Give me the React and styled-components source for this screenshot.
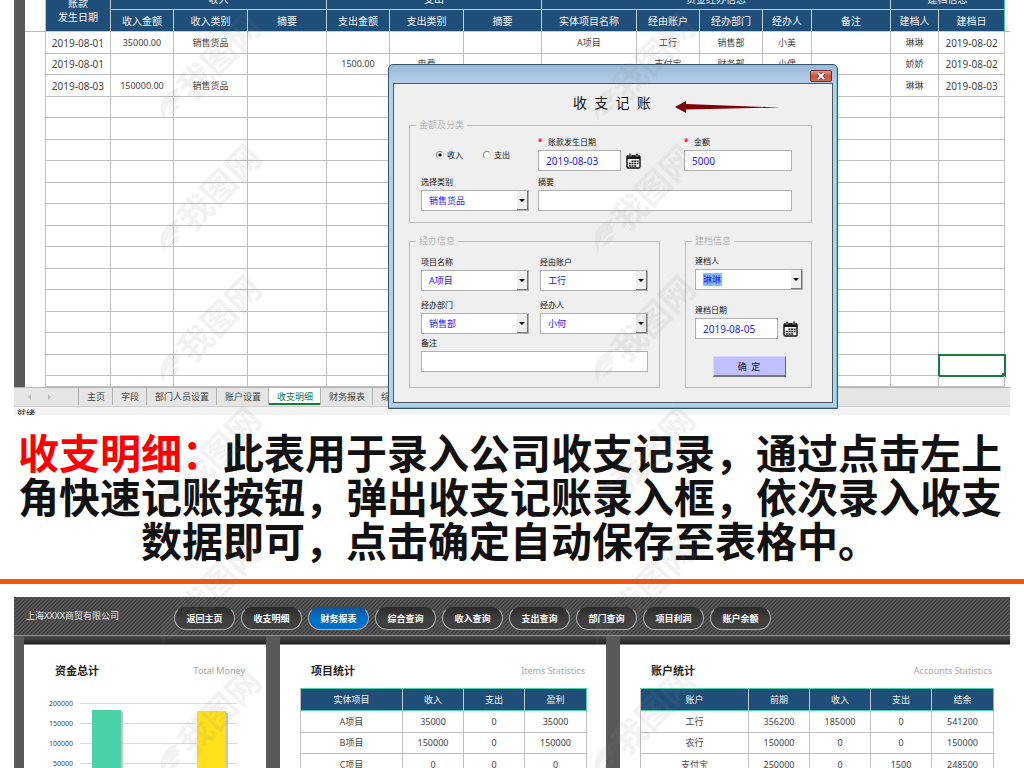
import React from 'react';
import styled, { createGlobalStyle, css } from 'styled-components';

const GlobalStyle = createGlobalStyle`
  * {
    box-sizing: border-box;
  }

  body {
    margin: 0;
    background: #fff;
    color: #444;
    font-family: 'Noto Sans', 'Noto Sans CJK SC', sans-serif;
    font-size: 9px;
    line-height: 12px;
  }

  button, input, select {
    font-family: inherit;
    margin: 0;
  }
`;

const columns = [65, 63, 74, 79, 63, 74, 78, 95, 63, 63, 49, 79, 48, 66];

const subHeaders = [
  '收入金额', '收入类别', '摘要', '支出金额', '支出类别', '摘要',
  '实体项目名称', '经由账户', '经办部门', '经办人', '备注', '建档人', '建档日',
];

const records = [
  ['2019-08-01', '35000.00', '销售货品', '', '', '', '', 'A项目', '工行', '销售部', '小美', '', '琳琳', '2019-08-02'],
  ['2019-08-01', '', '', '', '1500.00', '电费', '', '', '支付宝', '财务部', '小偶', '', '娇娇', '2019-08-02'],
  ['2019-08-03', '150000.00', '销售货品', '', '', '', '', '', '', '', '', '', '琳琳', '2019-08-03'],
];

const emptyRows = Array.from({ length: 14 }, (_, i) => i);

const sheetTabs = ['主页', '字段', '部门人员设置', '账户设置', '收支明细', '财务报表', '综合查询'];

const navItems = ['返回主页', '收支明细', '财务报表', '综合查询', '收入查询', '支出查询', '部门查询', '项目利润', '账户余额'];

const itemStats = {
  widths: [102, 61, 61, 62],
  head: ['实体项目', '收入', '支出', '盈利'],
  rows: [
    ['A项目', '35000', '0', '35000'],
    ['B项目', '150000', '0', '150000'],
    ['C项目', '0', '0', '0'],
  ],
};

const accountStats = {
  widths: [108, 61, 61, 61, 62],
  head: ['账户', '前期', '收入', '支出', '结余'],
  rows: [
    ['工行', '356200', '185000', '0', '541200'],
    ['农行', '150000', '0', '0', '150000'],
    ['支付宝', '250000', '0', '1500', '248500'],
  ],
};

const CalendarIcon = () => (
  <svg width="15" height="16" viewBox="0 0 15 16" aria-hidden="true">
    <rect x="1" y="3" width="13" height="12" rx="1" fill="#f4f4f4" stroke="#111" strokeWidth="1.4" />
    <path d="M1 2.5h13V6H1z" fill="#111" />
    <path d="M4 .5v3M11 .5v3" stroke="#f0f0f0" strokeWidth="2.6" />
    <path d="M4 .5v3M11 .5v3" stroke="#111" strokeWidth="1.4" />
    <path
      d="M5.5 8.2h2m.7 0h2m.7 0h1.6M2.8 10.6h2m.7 0h2m.7 0h2m.7 0h1.6M2.8 13h2m.7 0h2m.7 0h2"
      stroke="#111"
      strokeWidth="1.5"
    />
  </svg>
);

const Watermark = () => (
  <WatermarkLayer aria-hidden="true">
    <defs>
      <pattern id="mark" width="434" height="131" patternUnits="userSpaceOnUse">
        <g fill="#8a8a8a">
          <text
            x="0"
            y="0"
            transform="translate(193 102) rotate(-46)"
            fontSize="34"
            fontWeight="700"
          >
            我图网
          </text>
          <path d="M164 121c-7-14-3-27 15-34-2 4-3 7-2 9-7 4-12 12-13 25z" />
          <path d="M168 111c1-9 6-15 13-18-3 4-3 6-1 8-5 1-9 5-12 10z" />
          <path d="M168 115c3-6 7-10 12-11-1 6-5 10-12 11z" />
        </g>
      </pattern>
    </defs>
    <rect width="100%" height="100%" fill="url(#mark)" />
  </WatermarkLayer>
);

const SelectField = ({ id, label, value, selected }) => (
  <Field>
    <Label htmlFor={id}>{label}</Label>
    <SelectBox>
      <Select id={id} defaultValue={value} $selected={selected}>
        <option>{value}</option>
      </Select>
      <Arrow>
        <svg width="6" height="3" viewBox="0 0 6 3">
          <path d="M0 0h6L3 3z" fill="#000" />
        </svg>
      </Arrow>
    </SelectBox>
  </Field>
);

const DateField = ({ id, label, value, required }) => (
  <Field>
    <Label htmlFor={id}>
      {required && <Star>*</Star>}
      {label}
    </Label>
    <DateRow>
      <Input id={id} defaultValue={value} />
      <IconButton type="button" aria-label="选择日期">
        <CalendarIcon />
      </IconButton>
    </DateRow>
  </Field>
);

const RecordDialog = () => (
  <Dialog role="dialog" aria-label="收支记账">
    <TitleBar>
      <CloseButton type="button" aria-label="关闭">
        <svg width="10" height="8" viewBox="0 0 10 8">
          <path d="M2 1l6 6M8 1L2 7" stroke="#6b2a2a" strokeWidth="3.4" />
          <path d="M2 1l6 6M8 1L2 7" stroke="#fff" strokeWidth="2" />
        </svg>
      </CloseButton>
    </TitleBar>
    <Client>
      <DialogHead>
        <DialogTitle>收  支  记  账</DialogTitle>
        <svg width="106" height="22" viewBox="0 0 106 22" aria-hidden="true">
          <path d="M0 15L11 9v3l94 3.500-94 2v3.500z" fill="#800008" />
        </svg>
      </DialogHead>

      <Group>
        <Legend>金额及分类</Legend>
        <AmountGrid>
          <Radios>
            <RadioLabel>
              <Radio type="radio" name="kind" defaultChecked />
              收入
            </RadioLabel>
            <RadioLabel>
              <Radio type="radio" name="kind" />
              支出
            </RadioLabel>
          </Radios>
          <DateField id="date" label="账款发生日期" value="2019-08-03" required />
          <Field>
            <Label htmlFor="amount"><Star>*</Star>金额</Label>
            <Input id="amount" defaultValue="5000" />
          </Field>
          <SelectField id="category" label="选择类别" value="销售货品" />
          <Wide>
            <Label htmlFor="summary">摘要</Label>
            <Input id="summary" />
          </Wide>
        </AmountGrid>
      </Group>

      <GroupRow>
        <Group>
          <Legend>经办信息</Legend>
          <HandlerBody>
            <HandlerGrid>
              <SelectField id="project" label="项目名称" value="A项目" />
              <SelectField id="account" label="经由账户" value="工行" />
              <SelectField id="department" label="经办部门" value="销售部" />
              <SelectField id="handler" label="经办人" value="小何" />
            </HandlerGrid>
            <Field>
              <Label htmlFor="remark">备注</Label>
              <Input id="remark" />
            </Field>
          </HandlerBody>
        </Group>
        <Group>
          <Legend>建档信息</Legend>
          <FilingBody>
            <SelectField id="filer" label="建档人" value="琳琳" selected />
            <DateField id="filed" label="建档日期" value="2019-08-05" />
            <Submit type="button">确  定</Submit>
          </FilingBody>
        </Group>
      </GroupRow>
    </Client>
  </Dialog>
);

const Stats = ({ data }) => (
  <Grid>
    <colgroup>
      {data.widths.map((w, i) => <Col key={i} $w={w} />)}
    </colgroup>
    <thead>
      <tr>{data.head.map((h) => <StatTh key={h}>{h}</StatTh>)}</tr>
    </thead>
    <tbody>
      {data.rows.map((row) => (
        <Row key={row[0]}>
          {row.map((cell, i) => <Td key={i}>{cell}</Td>)}
        </Row>
      ))}
    </tbody>
  </Grid>
);

const MoneyChart = () => (
  <Chart viewBox="0 0 200 100" role="img" aria-label="资金总计">
    {[200000, 150000, 100000, 50000].map((v, i) => (
      <g key={v}>
        <text x="25" y={18 + i * 20} textAnchor="end" fontSize="7" fill="#444">{v}</text>
        <path d={`M32 ${15.5 + i * 20}h157`} stroke="#dcdcdc" />
      </g>
    ))}
    <rect x="46" y="24" width="29" height="80" fill="#c4c4c4" />
    <rect x="151" y="25" width="29" height="80" fill="#c4c4c4" />
    <rect x="44" y="22" width="29" height="80" fill="#4ad1a8" />
    <rect x="149" y="23" width="29" height="80" fill="#ffe01b" />
  </Chart>
);

const App = () => (
  <Page>
    <GlobalStyle />

    <Sheet>
      <SheetBody>
        <Stripe />
        <Gutter $w={20} />
        <Grid>
          <colgroup>
            {columns.map((w, i) => <Col key={i} $w={w} />)}
          </colgroup>
          <thead>
            <tr>
              <DateTh rowSpan={2}>账款<br />发生日期</DateTh>
              <Th colSpan={3}>收入</Th>
              <Th colSpan={3}>支出</Th>
              <Th colSpan={5}>资金经办信息</Th>
              <Th colSpan={2}>建档信息</Th>
            </tr>
            <tr>
              {subHeaders.map((h, i) => <Th key={i}>{h}</Th>)}
            </tr>
          </thead>
          <tbody>
            {records.map((row, r) => (
              <Row key={r}>
                {row.map((cell, i) => (
                  <Td key={i} $date={i === 0 || i === 13}>{cell}</Td>
                ))}
              </Row>
            ))}
            {emptyRows.map((r) => (
              <Row key={r} $last={r === 13}>
                {columns.map((w, i) => (
                  <Td key={i} $active={r === 12 && i === 13} />
                ))}
              </Row>
            ))}
          </tbody>
        </Grid>
        <Gutter $w={5} />
      </SheetBody>
      <TabBar>
        <TabArrows>
          <svg width="24" height="6" viewBox="0 0 24 6" aria-hidden="true">
            <path d="M3 0v6L0 3zM20 0v6l3-3z" fill="#b5b5b5" />
          </svg>
        </TabArrows>
        {sheetTabs.map((t) => (
          <Tab key={t} type="button" $active={t === '收支明细'}>{t}</Tab>
        ))}
      </TabBar>
      <Status>就绪</Status>
    </Sheet>

    <Headline>
      <em>收支明细：</em>此表用于录入公司收支记录，通过点击左上<br />
      角快速记账按钮，弹出收支记账录入框，依次录入收支<br />
      数据即可，点击确定自动保存至表格中。
    </Headline>
    <Divider />

    <Dashboard>
      <DashHeader>
        <Company>上海XXXX商贸有限公司</Company>
        <Nav>
          {navItems.map((n) => (
            <Pill key={n} href="#" $active={n === '财务报表'}>{n}</Pill>
          ))}
        </Nav>
      </DashHeader>
      <Cards>
        <Card>
          <CardHead>
            <CardTitle>资金总计</CardTitle>
            <CardNote>Total Money</CardNote>
          </CardHead>
          <MoneyChart />
        </Card>
        <Card>
          <CardHead>
            <CardTitle>项目统计</CardTitle>
            <CardNote>Items Statistics</CardNote>
          </CardHead>
          <Stats data={itemStats} />
        </Card>
        <Card>
          <CardHead>
            <CardTitle>账户统计</CardTitle>
            <CardNote>Accounts Statistics</CardNote>
          </CardHead>
          <Stats data={accountStats} />
        </Card>
      </Cards>
    </Dashboard>

    <RecordDialog />
    <Watermark />
  </Page>
);

export default App;

const Page = styled.div`
  position: relative;
  height: 100vh;
  overflow: hidden;
`;

const Sheet = styled.section`
  margin: -12px 14px 0;
`;

const SheetBody = styled.div`
  display: flex;
`;

const Stripe = styled.div`
  width: 11px;
  background: #595959;
`;

const Gutter = styled.div`
  width: ${({ $w }) => $w}px;
  height: 44px;
  border-bottom: 1px solid #b8b8b8;
`;

const Grid = styled.table`
  flex: 1;
  width: 100%;
  table-layout: fixed;
  border-collapse: separate;
  border-spacing: 0;
  border-left: 1px solid #bfbfbf;
`;

const Col = styled.col`
  width: ${({ $w }) => $w}px;
`;

const Th = styled.th`
  height: 22px;
  padding: 0;
  background: #1f4e79;
  border-right: 1px solid #c3cdd6;
  border-bottom: 1px solid #c3cdd6;
  color: #f2f5f8;
  font-size: 10px;
  font-weight: 400;

  &:last-child {
    border-right-color: #4ad1a8;
  }
`;

const DateTh = styled(Th)`
  line-height: 14px;
`;

const StatTh = styled(Th)`
  height: 23px;
  border-top: 1px solid #4ad1a8;
  border-bottom: 1px solid #4ad1a8;
  font-size: 9px;
`;

const Td = styled.td`
  position: relative;
  padding: 0;
  border-right: 1px solid #bfbfbf;
  border-bottom: 1px solid #bfbfbf;
  text-align: center;
  font-size: ${({ $date }) => ($date ? 10 : 9)}px;

  ${({ $active }) => $active && css`
    outline: 2px solid #1a7a40;
    outline-offset: -1px;

    &:after {
      content: '';
      position: absolute;
      right: -2px;
      bottom: -2px;
      width: 4px;
      height: 4px;
      background: #1a7a40;
    }
  `}
`;

const Row = styled.tr`
  height: ${({ $last }) => ($last ? 11 : 22)}px;

  &:nth-child(even) {
    height: 21px;
  }
`;

const TabBar = styled.div`
  display: flex;
  align-items: flex-start;
  height: 20px;
  background: #e5e5e5;
  border-top: 1px solid #b5b5b5;
  border-bottom: 1px solid #cfcfcf;
`;

const TabArrows = styled.div`
  display: flex;
  align-items: center;
  justify-content: center;
  width: 65px;
  height: 17px;
  padding-right: 12px;
  border-right: 1px solid #aaa;
`;

const Tab = styled.button`
  height: 17px;
  padding: 0 7px 0 8px;
  border: none;
  border-right: 1px solid #b0b0b0;
  background: none;
  color: #444;
  font-size: 9px;
  line-height: 16px;

  ${({ $active }) => $active && css`
    background: #fff;
    color: #1a7a40;
    box-shadow: inset 0 -2px #1a7a40;
  `}
`;

const Status = styled.div`
  height: 8px;
  overflow: hidden;
  padding: 1px 3px 0;
  background: #f3f3f3;
  color: #222;
`;

const Headline = styled.h1`
  margin: 14px 0 18px;
  padding-right: 4px;
  color: #111;
  font-family: 'Noto Sans CJK SC', sans-serif;
  font-size: 41px;
  font-weight: 700;
  line-height: 44px;
  text-align: center;
  white-space: nowrap;

  em {
    color: #f00;
    font-style: normal;
  }
`;

const Divider = styled.div`
  height: 5px;
  background: #ee5510;
`;

const Dashboard = styled.section`
  margin: 13px 14px 0;
  background: #595959;
`;

const DashHeader = styled.header`
  display: flex;
  align-items: center;
  height: 39px;
  padding-left: 12px;
  border-bottom: 1px solid #929292;
  background: linear-gradient(135deg, #444 25%, #555 25% 50%, #444 50% 75%, #555 75%) 0 0 / 4px 4px;
`;

const Company = styled.div`
  width: 148px;
  color: #e6e6e6;
`;

const Nav = styled.nav`
  display: flex;
  gap: 6px;
  padding-top: 4px;
`;

const Pill = styled.a`
  width: 61px;
  height: 24px;
  border: 1px solid #b0b0b0;
  border-top-color: #4a4a4a;
  border-radius: 12px;
  background: ${({ $active }) => ($active
    ? 'linear-gradient(#0a5699, #0070c8 50%)'
    : 'linear-gradient(#2b2b2b, #404040 60%)')};
  color: #fff;
  font-weight: 700;
  line-height: 23px;
  text-align: center;
  text-decoration: none;
`;

const Cards = styled.div`
  display: grid;
  grid-template-columns: minmax(0, 242fr) minmax(0, 326fr) minmax(0, 390fr);
  gap: 14px;
  padding-left: 10px;
`;

const Card = styled.article`
  height: 160px;
  padding: 9px 19px 0 20px;
  background: linear-gradient(#4c4c4c, #222 8px, #8a8a8a 8px 9px, #fff 9px);

  &:last-child {
    padding-right: 16px;
  }
`;

const CardHead = styled.div`
  display: flex;
  justify-content: space-between;
  padding: 14px 2px 5px 11px;
  line-height: 24px;
`;

const CardTitle = styled.h2`
  margin: 0;
  color: #222;
  font-size: 11px;
  font-weight: 700;
`;

const CardNote = styled.span`
  color: #a6a6a6;
`;

const Chart = styled.svg`
  display: block;
  width: 200px;
  height: 100px;
  margin-left: 4px;
`;

const Dialog = styled.div`
  position: absolute;
  top: 64px;
  left: 388px;
  width: 450px;
  padding: 0 4px 5px;
  border: 1px solid #33536e;
  border-radius: 5px 5px 0 0;
  background: linear-gradient(#9ab8d8, #b7d0ea 20px, #b7d0ea);
  box-shadow: inset 0 -1px #4cc4e8, inset -1px 0 #6fcbe8;
`;

const TitleBar = styled.div`
  display: flex;
  justify-content: flex-end;
  align-items: center;
  height: 18px;
  padding: 3px 1px 0 0;
`;

const CloseButton = styled.button`
  display: flex;
  align-items: center;
  justify-content: center;
  width: 22px;
  height: 12px;
  padding: 0;
  border: 1px solid #6e2b2b;
  border-radius: 2px;
  background: linear-gradient(#e29a8c, #c9503c 50%, #d4705a);
`;

const Client = styled.form`
  padding: 0 20px 14px 15px;
  border: 1px solid #4c5866;
  background: #efefef;
  color: #111;
`;

const DialogHead = styled.div`
  display: flex;
  align-items: center;
  gap: 24px;
  height: 35px;
  padding: 2px 0 0 164px;
`;

const DialogTitle = styled.h2`
  margin: 0;
  font-size: 14px;
  font-weight: 400;
  line-height: 20px;
  white-space: pre;
`;

const Group = styled.fieldset`
  min-width: 0;
  margin: 0;
  padding: 0;
  border: 1px solid #bdbdbd;
`;

const Legend = styled.legend`
  margin-left: 6px;
  padding: 0 3px;
  color: #a0a0a0;
  font-weight: 300;
`;

const GroupRow = styled.div`
  display: grid;
  grid-template-columns: 251fr 127fr;
  gap: 25px;
  margin-top: 12px;
`;

const AmountGrid = styled.div`
  display: grid;
  grid-template-columns: 108px 137px 108px;
  gap: 4px 9px;
  padding: 4px 19px 11px 11px;
`;

const Field = styled.div`
  display: flex;
  flex-direction: column;
`;

const Wide = styled(Field)`
  grid-column: 2 / 4;
`;

const Label = styled.label`
  margin-bottom: 2px;
  font-size: 8px;
  line-height: 13px;
`;

const Star = styled.span`
  display: inline-block;
  width: 10px;
  color: #f00;
  font-weight: 700;
`;

const Input = styled.input`
  width: 100%;
  height: 21px;
  padding: 0 7px;
  border: 1px solid #b0b0b0;
  background: #fff;
  color: #1a1aff;
  font-size: 10px;
`;

const DateRow = styled.div`
  display: flex;
  align-items: center;
  gap: 5px;

  input {
    width: 83px;
  }
`;

const IconButton = styled.button`
  display: flex;
  padding: 0;
  border: none;
  background: none;
`;

const SelectBox = styled.div`
  display: flex;
  height: 21px;
  border: 1px solid #b0b0b0;
  background: #fff;
`;

const Select = styled.select`
  flex: 1;
  min-width: 0;
  padding: 0 7px;
  border: none;
  appearance: none;
  background: ${({ $selected }) => ($selected
    ? 'linear-gradient(#85bcff, #85bcff) 7px center / 19px 13px no-repeat'
    : 'none')};
  color: #1a1aff;
  font-size: 9px;
`;

const Arrow = styled.span`
  display: flex;
  align-items: center;
  justify-content: center;
  width: 11px;
  border-right: 1px solid #777;
  border-bottom: 1px solid #777;
  background: #efefef;
  pointer-events: none;
`;

const Radios = styled.div`
  display: flex;
  align-items: center;
  gap: 20px;
  padding: 4px 0 0 15px;
`;

const RadioLabel = styled.label`
  display: flex;
  align-items: center;
  gap: 3px;
  font-size: 8px;
`;

const Radio = styled.input`
  appearance: none;
  width: 8px;
  height: 8px;
  margin: 0;
  border: 1px solid #888;
  border-right-color: #ddd;
  border-bottom-color: #ddd;
  border-radius: 50%;
  background: #fff;

  &:checked {
    background: radial-gradient(circle, #000 0 1px, #fff 2px);
  }
`;

const HandlerBody = styled.div`
  display: flex;
  flex-direction: column;
  gap: 2px;
  padding: 8px 11px 15px;
`;

const HandlerGrid = styled.div`
  display: grid;
  grid-template-columns: 1fr 1fr;
  gap: 7px 11px;
`;

const FilingBody = styled.div`
  display: flex;
  flex-direction: column;
  gap: 13px;
  padding: 7px 8px 0 9px;
`;

const Submit = styled.button`
  align-self: center;
  width: 73px;
  height: 21px;
  margin-top: 4px;
  padding: 0;
  border: 1px solid #d8d8ff;
  border-right-color: #666;
  border-bottom: 2px solid #777;
  background: #c0c0ff;
  color: #111;
  font-size: 9px;
  white-space: pre;
`;

const WatermarkLayer = styled.svg`
  position: absolute;
  inset: 0;
  width: 100%;
  height: 100%;
  opacity: 0.1;
  pointer-events: none;
`;
